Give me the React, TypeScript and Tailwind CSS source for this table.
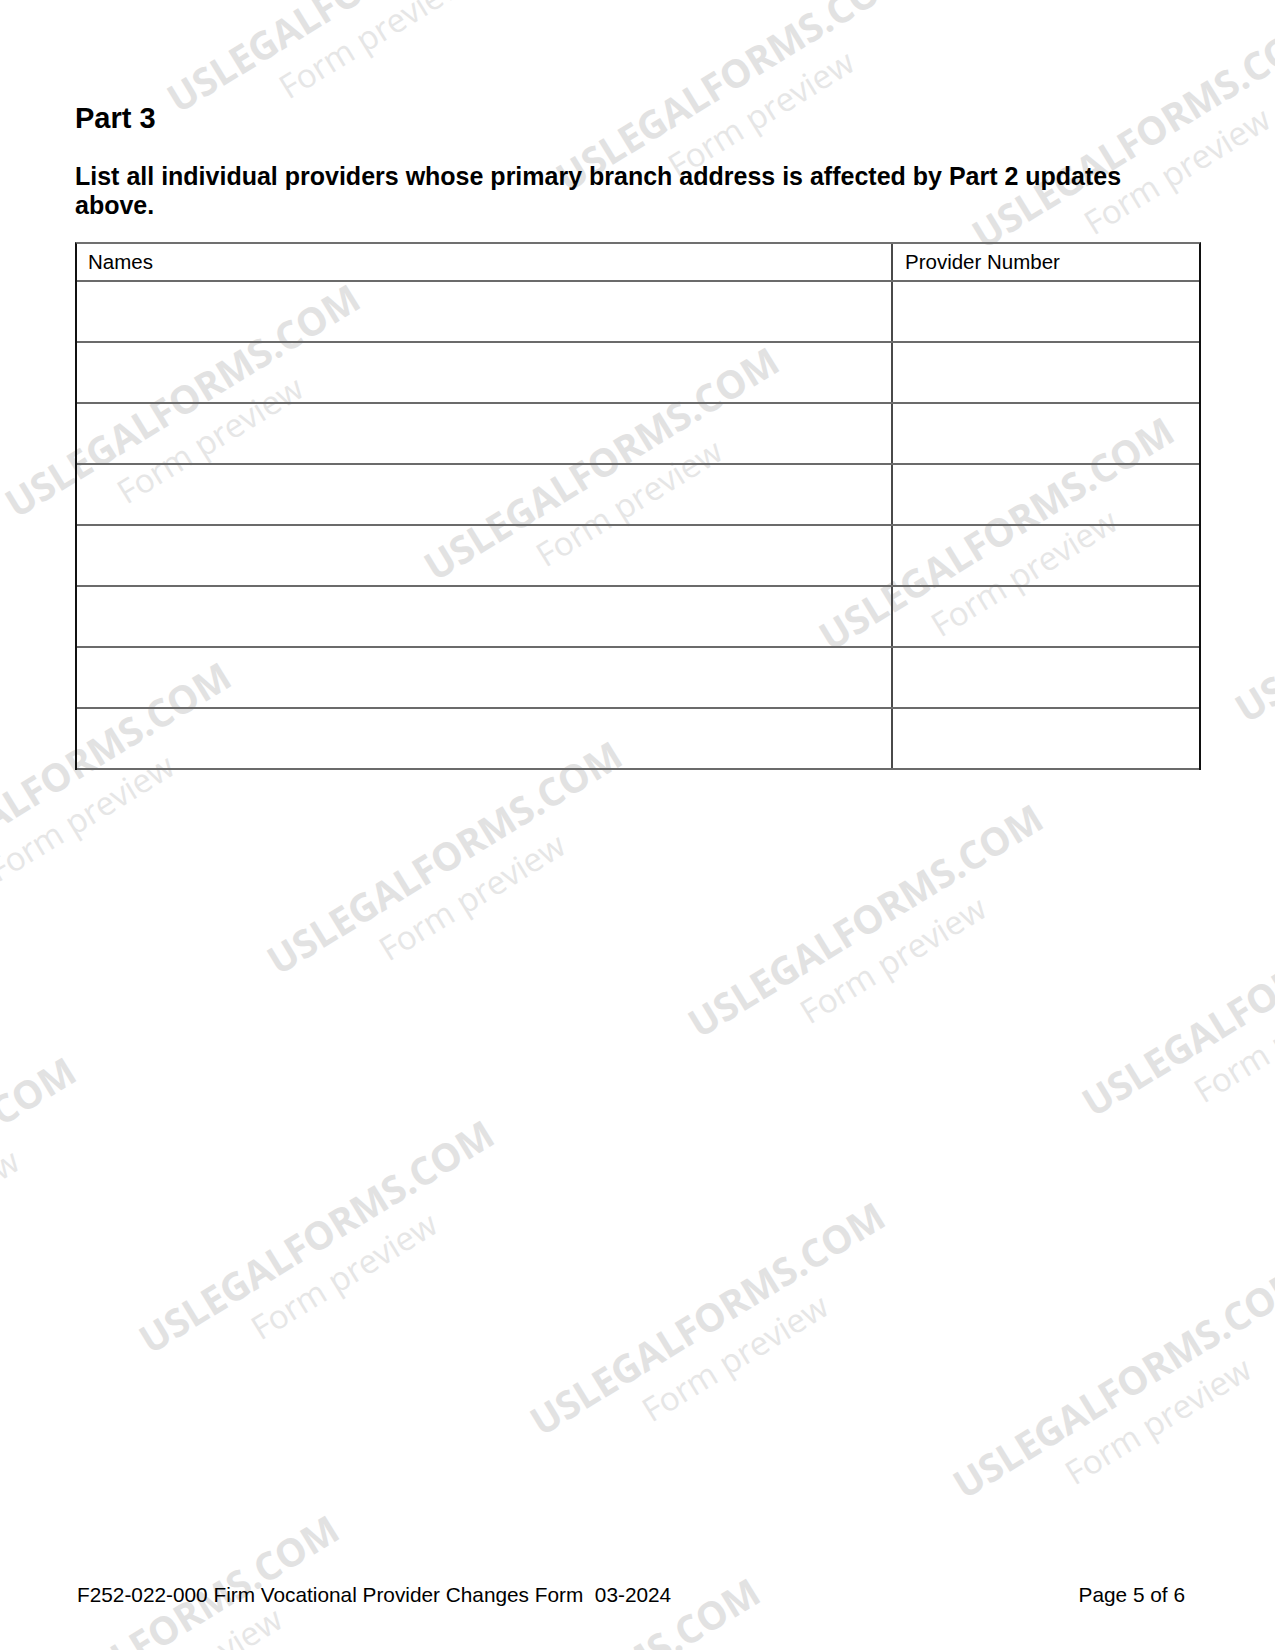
import React from "react";

// Watermark tiles: centre of the "USLEGALFORMS.COM" line, page pixels
const marks: [number, number][] = [
  [344, -5],
  [733, 74],
  [1149, 131],
  [182, 400],
  [601, 463],
  [996, 533],
  [1412, 605],
  [53, 778],
  [444, 857],
  [865, 920],
  [1259, 999],
  [-102, 1173],
  [316, 1236],
  [707, 1318],
  [1130, 1381],
  [161, 1631],
  [582, 1694],
];

const rows = Array.from({ length: 8 }, (_, i) => i);

function Watermark({ x, y }: { x: number; y: number }) {
  return (
    <div className="absolute w-0 h-0 -rotate-[31.5deg]" style={{ left: x, top: y }}>
      <span className="absolute left-0 top-0 -translate-x-1/2 -translate-y-1/2 whitespace-nowrap font-['Open_Sans',sans-serif] font-bold text-[38.5px] leading-none text-[#e2e2e2]">
        USLEGALFORMS.COM
      </span>
      <span className="absolute left-[3px] top-[48px] -translate-x-1/2 -translate-y-1/2 whitespace-nowrap font-['Open_Sans',sans-serif] text-[33px] leading-none text-[#e6e6e6]">
        Form preview
      </span>
    </div>
  );
}

export default function App() {
  return (
    <div className="relative w-[1275px] h-[1650px] bg-white overflow-hidden font-['Liberation_Sans',Arial,sans-serif] text-black">
      {/* watermark layer */}
      <div className="absolute inset-0 pointer-events-none">
        {marks.map(([x, y], i) => (
          <Watermark key={i} x={x} y={y} />
        ))}
      </div>

      <div className="relative flex flex-col h-full">
        <div className="pl-[75px] pr-[74px] pt-[102px]">
          <h2 className="text-[29px] leading-[32px] font-bold">Part 3</h2>
          <p className="mt-[28px] text-[25px] leading-[29px] font-bold">
            List all individual providers whose primary branch address is affected by Part 2 updates
            <br />
            above.
          </p>

          {/* providers table */}
          <div className="mt-[22px] border-t-2 border-x-2 border-t-[#707070] border-x-[#111]">
            <div className="grid grid-cols-[814px_1fr] h-[38px] border-b-2 border-[#6b6b6b] text-[20.5px] leading-none">
              <div className="flex items-center pl-[11px]">Names</div>
              <div className="flex items-center pl-[12px] border-l-2 border-[#4a4a4a]">Provider Number</div>
            </div>
            {rows.map((r) => (
              <div key={r} className="grid grid-cols-[814px_1fr] h-[61px] border-b-2 border-[#6b6b6b]">
                <div />
                <div className="border-l-2 border-[#4a4a4a]" />
              </div>
            ))}
          </div>
        </div>

        {/* footer */}
        <div className="mt-auto pb-[43px] pl-[77px] pr-[90px] flex justify-between text-[20.8px] leading-[24px]">
          <span className="whitespace-pre">F252-022-000 Firm Vocational Provider Changes Form  03-2024</span>
          <span>Page 5 of 6</span>
        </div>
      </div>
    </div>
  );
}
